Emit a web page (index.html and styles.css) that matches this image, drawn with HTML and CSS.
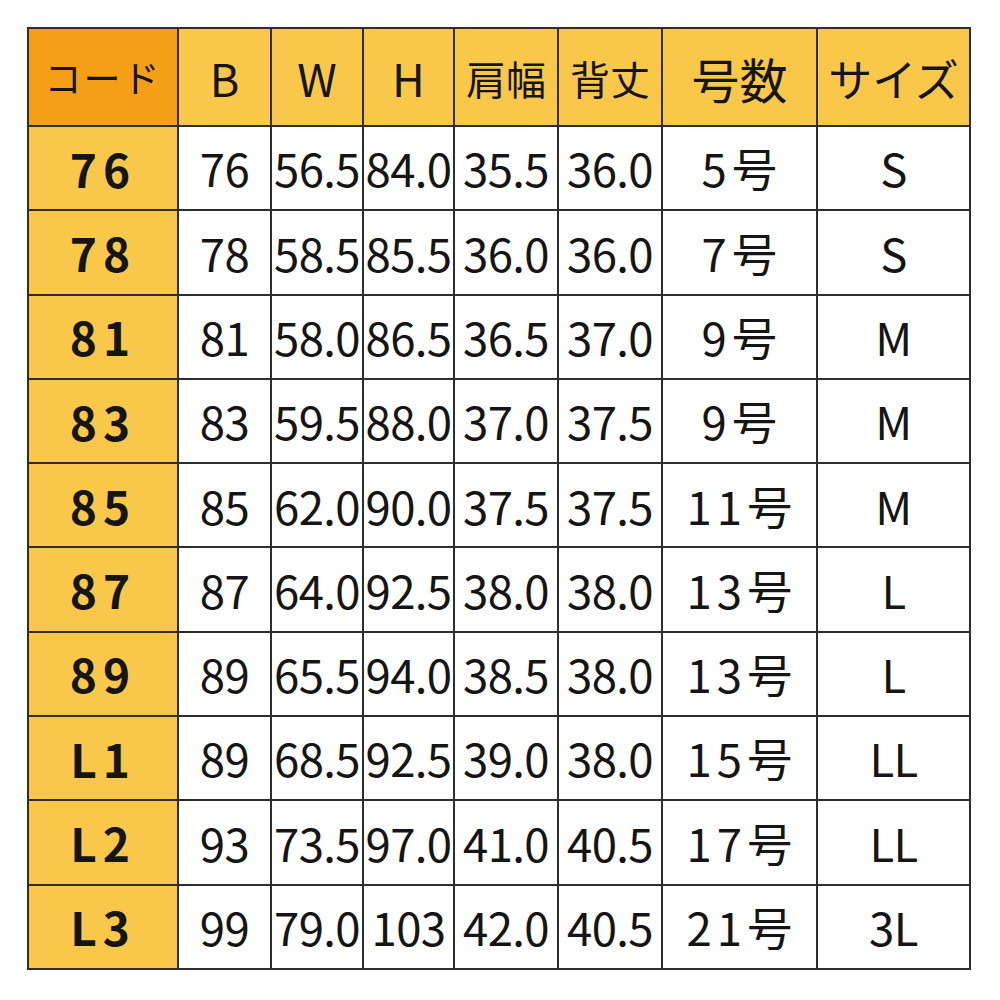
FILE: index.html
```html
<!DOCTYPE html>
<html lang="ja">
<head>
<meta charset="utf-8">
<title>サイズ表</title>
<link rel="stylesheet" href="styles.css">
</head>
<body>
<table class="size-table">
  <colgroup>
    <col class="c-code"><col class="c-b"><col class="c-w"><col class="c-h"><col class="c-kata"><col class="c-se"><col class="c-go"><col class="c-size">
  </colgroup>
  <thead>
    <tr class="head">
      <th class="h-code">コード</th>
      <th class="h-latin">B</th>
      <th class="h-latin">W</th>
      <th class="h-latin">H</th>
      <th class="h-kanji">肩幅</th>
      <th class="h-kanji">背丈</th>
      <th class="h-go">号数</th>
      <th class="h-size">サイズ</th>
    </tr>
  </thead>
  <tbody>
    <tr><th class="code">76</th><td>76</td><td>56.5</td><td>84.0</td><td>35.5</td><td>36.0</td><td class="go">5号</td><td>S</td></tr>
    <tr><th class="code">78</th><td>78</td><td>58.5</td><td>85.5</td><td>36.0</td><td>36.0</td><td class="go">7号</td><td>S</td></tr>
    <tr><th class="code">81</th><td>81</td><td>58.0</td><td>86.5</td><td>36.5</td><td>37.0</td><td class="go">9号</td><td>M</td></tr>
    <tr><th class="code">83</th><td>83</td><td>59.5</td><td>88.0</td><td>37.0</td><td>37.5</td><td class="go">9号</td><td>M</td></tr>
    <tr><th class="code">85</th><td>85</td><td>62.0</td><td>90.0</td><td>37.5</td><td>37.5</td><td class="go">11号</td><td>M</td></tr>
    <tr><th class="code">87</th><td>87</td><td>64.0</td><td>92.5</td><td>38.0</td><td>38.0</td><td class="go">13号</td><td>L</td></tr>
    <tr><th class="code">89</th><td>89</td><td>65.5</td><td>94.0</td><td>38.5</td><td>38.0</td><td class="go">13号</td><td>L</td></tr>
    <tr><th class="code">L1</th><td>89</td><td>68.5</td><td>92.5</td><td>39.0</td><td>38.0</td><td class="go">15号</td><td>LL</td></tr>
    <tr><th class="code">L2</th><td>93</td><td>73.5</td><td>97.0</td><td>41.0</td><td>40.5</td><td class="go">17号</td><td>LL</td></tr>
    <tr><th class="code">L3</th><td>99</td><td>79.0</td><td>103</td><td>42.0</td><td>40.5</td><td class="go">21号</td><td>3L</td></tr>
  </tbody>
</table>
</body>
</html>
```

FILE: styles.css
```css
html, body {
  margin: 0;
  padding: 0;
  background: #ffffff;
}

body {
  padding: 27px;
  font-family: "Noto Sans CJK JP", "Noto Sans", sans-serif;
  color: #151515;
}

.size-table {
  border-collapse: collapse;
  table-layout: fixed;
  width: 942px;
}

.c-code { width: 150px; }
.c-b { width: 93px; }
.c-w { width: 92px; }
.c-h { width: 91px; }
.c-kata { width: 104px; }
.c-se { width: 104px; }
.c-go { width: 155px; }
.c-size { width: 153px; }

.size-table th,
.size-table td {
  border: 2.5px solid #2e2e2e;
  padding: 0;
  text-align: center;
  vertical-align: middle;
  white-space: nowrap;
  overflow: visible;
  line-height: 1;
}

.head {
  height: 98px;
  background: #f9c84a;
}

.head th {
  font-weight: 400;
  padding-top: 1px;
}

.h-code {
  background: #f49f16;
  font-size: 37px;
  letter-spacing: 2px;
}

.h-latin { font-size: 45px; }
.h-kanji { font-size: 40px; }
.h-go { font-size: 48px; }
.h-size { font-size: 44px; }

tbody tr {
  height: 84.3px;
}

tbody td {
  font-size: 45.5px;
  font-weight: 400;
  letter-spacing: -0.6px;
  background: #ffffff;
  padding-bottom: 1px;
}

.size-table .code {
  background: #f9c84a;
  font-size: 46px;
  font-weight: 700;
  letter-spacing: 6px;
  padding-bottom: 1px;
}

.size-table td.go {
  letter-spacing: 5px;
  text-indent: 5px;
}
```
